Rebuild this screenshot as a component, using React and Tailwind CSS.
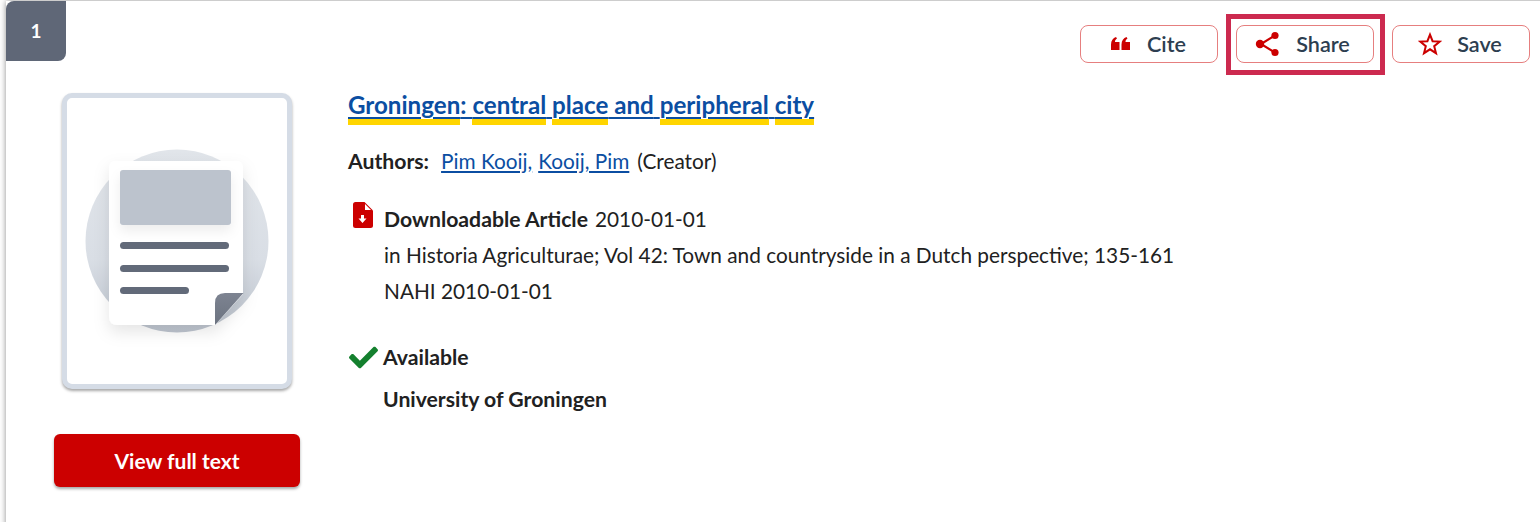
import React from 'react';
import { FaCheck } from 'react-icons/fa';

const QuoteIcon = () => (
  <svg width="22" height="14" viewBox="-1 0 22 14" fill="#cc0000">
    <path d="M0 7.5 C0 3.5 2 1 5 0 L6 1.6 C4.6 2.4 4 3.4 4 5 L8.5 5 L8.5 13 L0 13 Z" />
    <path d="M10.5 7.5 C10.5 3.5 12.5 1 15.5 0 L16.5 1.6 C15.1 2.4 14.5 3.4 14.5 5 L19 5 L19 13 L10.5 13 Z" />
  </svg>
);

const ShareIcon = () => (
  <svg width="26" height="26" viewBox="0 0 26 26" fill="#cc0000" stroke="#cc0000">
    <path d="M19 5 L6 13 L19 21" fill="none" strokeWidth="2.2" />
    <circle cx="20" cy="4.5" r="3.6" stroke="none" />
    <circle cx="5" cy="13" r="4.2" stroke="none" />
    <circle cx="20" cy="21.5" r="3.6" stroke="none" />
  </svg>
);

const StarIcon = () => (
  <svg width="24" height="24" viewBox="0 0 24 24" fill="none" stroke="#cc0000" strokeWidth="2">
    <path d="M12 2.6 L14.6 9.2 L21.8 9.6 L16.2 14.2 L18 21.2 L12 17.3 L6 21.2 L7.8 14.2 L2.2 9.6 L9.4 9.2 Z" />
  </svg>
);

const FileIcon = () => (
  <svg width="20" height="26" viewBox="0 0 20 26" className="shrink-0 mr-[11px] -mt-[2px]">
    <path
      d="M2.5 0 H11.5 L20 8.5 V23.5 Q20 26 17.5 26 H2.5 Q0 26 0 23.5 V2.5 Q0 0 2.5 0 Z"
      fill="#cc0000"
    />
    <path d="M12 2 L18 8 H12 Z" fill="#fff" />
    <path d="M8 13 H11 V16.5 H13.5 L9.5 21 L5.5 16.5 H8 Z" fill="#fff" />
  </svg>
);

const ActionButton = ({ icon, label, focused }) => (
  <div className="relative">
    <button
      className={`w-[138px] h-[38px] flex items-center justify-center gap-[15px] bg-white border border-[#e67f7f] rounded-lg text-[21.6px] font-semibold text-[#2d3e50] ${
        focused ? 'pr-[5px]' : 'pr-[2px]'
      }`}
    >
      {icon}
      {label}
    </button>
    {focused && (
      <span className="absolute -left-[10px] -right-[11px] -top-[11px] -bottom-[12px] border-[5px] border-[#cc2a4f]" />
    )}
  </div>
);

const Thumbnail = () => (
  <div className="w-[230px] h-[296px] bg-white border-[5px] border-[#d5dce6] rounded-[10px] shadow-[0_2px_3px_rgba(0,0,0,0.35)]">
    <svg width="220" height="286" viewBox="0 0 220 286" className="block">
      <defs>
        <linearGradient id="disc" x1="0" y1="0" x2="0" y2="1">
          <stop offset="0" stopColor="#e1e5ea" />
          <stop offset="0.6" stopColor="#d9dee5" />
          <stop offset="1" stopColor="#bdc4ce" />
        </linearGradient>
        <linearGradient id="fold" x1="0" y1="0" x2="0" y2="1">
          <stop offset="0" stopColor="#7d8391" />
          <stop offset="1" stopColor="#6c7380" />
        </linearGradient>
        <filter id="soft" x="-30%" y="-30%" width="160%" height="160%">
          <feDropShadow dx="0" dy="7" stdDeviation="8" floodColor="#000" floodOpacity="0.1" />
        </filter>
        <filter id="softer" x="-30%" y="-30%" width="160%" height="200%">
          <feDropShadow dx="0" dy="6" stdDeviation="6" floodColor="#000" floodOpacity="0.07" />
        </filter>
      </defs>
      <circle cx="110" cy="143" r="91.5" fill="url(#disc)" />
      <path
        d="M49 63 Q42 63 42 71 V218 Q42 227 51 227 H148 L176 196 V71 Q176 63 169 63 Z"
        fill="#fff"
        filter="url(#soft)"
      />
      <rect x="53" y="72" width="111" height="55" rx="3" fill="#bcc3cd" filter="url(#softer)" />
      <rect x="53" y="144" width="109" height="7" rx="3.5" fill="#626a79" />
      <rect x="53" y="167" width="109" height="7" rx="3.5" fill="#626a79" />
      <rect x="53" y="189" width="69" height="7" rx="3.5" fill="#626a79" />
      <path d="M158 195 H176.5 L148 227 V205 Q148 195 158 195 Z" fill="url(#fold)" />
    </svg>
  </div>
);

const Mark = ({ children }) => (
  <span className="border-b-[6px] border-[#ffd500]">{children}</span>
);

const App = () => {
  return (
    <div
      className="h-[522px] w-[1540px] overflow-hidden bg-white pt-px pl-[6px] text-[20.8px] text-[#212121]"
      style={{ fontFamily: 'Lato, sans-serif' }}
    >
      <div className="h-[540px] w-[1560px] bg-white shadow-[0_0_6px_rgba(0,0,0,0.45)]">
        <div className="flex items-start justify-between pr-[36px]">
          <div className="w-[60px] h-[60px] flex items-center justify-center bg-[#5f6777] text-white text-[19px] font-bold rounded-tl-lg rounded-br-lg">
            1
          </div>
          <div className="flex gap-[18px] pt-6">
            <ActionButton icon={<QuoteIcon />} label="Cite" />
            <ActionButton icon={<ShareIcon />} label="Share" focused />
            <ActionButton icon={<StarIcon />} label="Save" />
          </div>
        </div>

        <div className="flex pt-[30px] pl-12">
          <div className="w-[246px] flex flex-col items-center">
            <Thumbnail />
            <button className="mt-[45px] w-[246px] h-[53px] bg-[#cc0000] text-white text-[21px] font-bold rounded-md shadow-[0_2px_3px_rgba(0,0,0,0.35)]">
              View full text
            </button>
          </div>

          <div className="pl-12">
            <a className="block -mt-px text-[24.15px] font-bold leading-[26px] text-[#0b4ea2] underline underline-offset-[3px] decoration-[2px]">
              <Mark>Groningen</Mark>: <Mark>central</Mark> <Mark>place</Mark> and{' '}
              <Mark>peripheral</Mark> <Mark>city</Mark>
            </a>

            <div className="mt-[31px] flex leading-[24px]">
              <span className="font-bold text-[21.2px] mr-3">Authors:</span>
              <a className="text-[#0b4ea2] underline underline-offset-2">Pim Kooij,</a>
              <a className="ml-[6px] text-[#0b4ea2] underline underline-offset-2">Kooij, Pim</a>
              <span className="ml-2">(Creator)</span>
            </div>

            <div className="mt-[31px] flex pl-[5px]">
              <FileIcon />
              <div className="leading-[36px] -mt-[3px]">
                <div>
                  <span className="font-bold text-[21.2px]">Downloadable Article</span>
                  <span className="ml-[7px]">2010-01-01</span>
                </div>
                <div>in Historia Agriculturae; Vol 42: Town and countryside in a Dutch perspective; 135-161</div>
                <div>NAHI 2010-01-01</div>
              </div>
            </div>

            <div className="mt-[30px] flex items-center pl-px">
              <FaCheck size={29} color="#14802e" className="mr-[5px]" />
              <span className="font-bold text-[21.2px] leading-[36px]">Available</span>
            </div>
            <div className="mt-[6px] pl-[35px] font-bold text-[21.2px] leading-[36px]">University of Groningen</div>
          </div>
        </div>
      </div>
    </div>
  );
};

export default App;
